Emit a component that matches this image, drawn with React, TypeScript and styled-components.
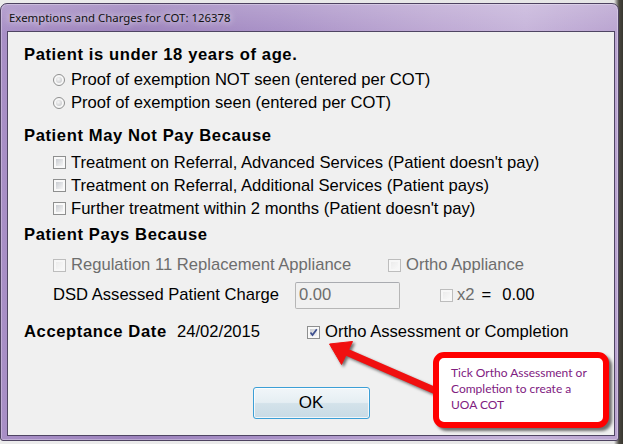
import React from 'react';
import styled, { createGlobalStyle } from 'styled-components';

const Global = createGlobalStyle`
  html, body { margin: 0; padding: 0; }
  body {
    width: 623px; height: 444px; overflow: hidden;
    background: #d9d9d9;
    font-family: "Liberation Sans", Arial, sans-serif;
  }
`;

const Desktop = styled.div`
  position: relative;
  width: 623px;
  height: 444px;
  box-sizing: border-box;
  padding-top: 3px;
  background: linear-gradient(90deg, #ececec 0, #e6e6e6 614px, #4a4840 619px, #38362f 623px);
`;

const Window = styled.div`
  width: 619px;
  height: 438px;
  box-sizing: border-box;
  display: flex;
  flex-direction: column;
  padding: 0 3px 4px 6px;
  border: 1px solid #4d4260;
  border-radius: 7px 7px 3px 3px;
  background:
    linear-gradient(180deg, rgba(255,255,255,0.18) 0, rgba(255,255,255,0) 30px),
    linear-gradient(90deg, #a88fc6 0%, #9c82bc 22%, #a991c7 45%, #bda8d3 70%, #c6b4da 85%, #b9a3d0 100%);
  box-shadow: inset 0 0 0 1px rgba(255,255,255,0.3);
`;

const TitleBar = styled.div`
  height: 27px;
  display: flex;
  align-items: center;
  padding-left: 2px;
  font-family: "Noto Sans", "Open Sans", sans-serif;
  font-size: 11.4px;
  color: #111;
  text-shadow: 0 0 6px rgba(255,255,255,0.7), 0 0 10px rgba(255,255,255,0.5);
`;

const Client = styled.div`
  flex: 1;
  display: flex;
  flex-direction: column;
  background: #f0f0f0;
  border: 1px solid #4f4563;
  font-size: 16.6px;
  color: #000;
`;

const Form = styled.div`
  display: flex;
  flex-direction: column;
  padding: 11px 0 0 16px;
`;

const Heading = styled.div<{ $mt?: number }>`
  height: 24px;
  display: flex;
  align-items: center;
  margin-top: ${p => p.$mt ?? 0}px;
  font-weight: bold;
  letter-spacing: 0.6px;
`;

const Group = styled.div<{ $mt?: number }>`
  display: flex;
  flex-direction: column;
  margin-top: ${p => p.$mt ?? 0}px;
`;

const Row = styled.div<{ $h?: number; $mt?: number; $indent?: boolean }>`
  height: ${p => p.$h ?? 23}px;
  display: flex;
  align-items: center;
  margin-top: ${p => p.$mt ?? 0}px;
  margin-left: ${p => (p.$indent === false ? 0 : 29)}px;
`;

const Option = styled.label<{ $w?: number; $disabled?: boolean; $ml?: number }>`
  display: flex;
  align-items: center;
  gap: 5px;
  white-space: nowrap;
  width: ${p => (p.$w ? `${p.$w}px` : 'auto')};
  margin-left: ${p => p.$ml ?? 0}px;
  color: ${p => (p.$disabled ? '#6d6d6d' : '#000')};
`;

const CheckBox = styled.span<{ $disabled?: boolean }>`
  position: relative;
  flex: none;
  width: 13px;
  height: 13px;
  box-sizing: border-box;
  padding: 2px;
  border: 1px solid ${p => (p.$disabled ? '#bdbdbd' : '#8e8f8f')};
  background: ${p =>
    p.$disabled
      ? 'linear-gradient(135deg, #ececec, #f8f8f8) content-box, #f7f7f7'
      : 'linear-gradient(135deg, #c9ccd1, #f5f5f5) content-box, #f9f9f9'};
  & > svg { position: absolute; left: 0; top: 0; }
`;

const Radio = styled.span`
  flex: none;
  width: 12px;
  height: 12px;
  margin-right: 1px;
  box-sizing: border-box;
  padding: 2px;
  border: 1px solid #8e8f8f;
  border-radius: 50%;
  background: radial-gradient(circle at 40% 35%, #f6f6f6 0, #d5d6d8 60%, #bfc1c4 100%) content-box, #f7f7f7;
`;

const Text = styled.span<{ $w?: number; $ml?: number; $muted?: boolean; $bold?: boolean }>`
  white-space: nowrap;
  width: ${p => (p.$w ? `${p.$w}px` : 'auto')};
  margin-left: ${p => p.$ml ?? 0}px;
  color: ${p => (p.$muted ? '#6d6d6d' : '#000')};
  font-weight: ${p => (p.$bold ? 'bold' : 'normal')};
  letter-spacing: ${p => (p.$bold ? '0.6px' : '0')};
  flex: none;
`;

const AmountInput = styled.div`
  width: 105px;
  height: 27px;
  box-sizing: border-box;
  display: flex;
  align-items: center;
  padding-left: 3px;
  border: 1px solid #b6b6b6;
  border-top-color: #a9abb0;
  border-radius: 2px;
  background: #f0f0f0;
  color: #6d6d6d;
`;

const ButtonBar = styled.div`
  display: flex;
  justify-content: center;
  margin-top: 43px;
`;

const OkButton = styled.button`
  width: 117px;
  height: 32px;
  box-sizing: border-box;
  border: 1px solid #3c9fd6;
  border-radius: 3px;
  font-family: "Liberation Sans", Arial, sans-serif;
  font-size: 17px;
  color: #000;
  background: linear-gradient(180deg, #f1f6f9 0%, #e5eef3 48%, #d3e2ea 52%, #c9dbe5 100%);
  box-shadow: inset 0 0 0 1px rgba(255,255,255,0.75);
  padding: 0;
`;

const Callout = styled.div`
  position: absolute;
  left: 433px;
  top: 352px;
  width: 176px;
  height: 76px;
  box-sizing: border-box;
  border: 6px solid #ff0000;
  border-radius: 11px;
  background: #fff;
  box-shadow: 3px 3px 3px rgba(0,0,0,0.55);
  padding: 7px 0 0 12px;
  font-family: Lato, "Open Sans", sans-serif;
  font-size: 12px;
  line-height: 16px;
  color: #80207f;
`;

const ArrowSvg = styled.svg`
  position: absolute;
  left: 320px;
  top: 335px;
  overflow: visible;
  filter: drop-shadow(2px 2px 1.5px rgba(0,0,0,0.55));
`;

const Check = () => (
  <svg width="11" height="11" viewBox="0 0 11 11">
    <path d="M2.5 5.5 L4.5 8 L8.8 2.2" fill="none" stroke="#3d4f8f" strokeWidth="1.7" />
  </svg>
);

export default function App() {
  return (
    <Desktop>
      <Global />
      <Window>
        <TitleBar>Exemptions and Charges for COT: 126378</TitleBar>
        <Client>
          <Form>
            <Heading>Patient is under 18 years of age.</Heading>
            <Group $mt={1}>
              <Row>
                <Option><Radio />Proof of exemption NOT seen (entered per COT)</Option>
              </Row>
              <Row>
                <Option><Radio />Proof of exemption seen (entered per COT)</Option>
              </Row>
            </Group>

            <Heading $mt={10}>Patient May Not Pay Because</Heading>
            <Group $mt={3}>
              <Row>
                <Option><CheckBox />Treatment on Referral, Advanced Services (Patient doesn't pay)</Option>
              </Row>
              <Row>
                <Option><CheckBox />Treatment on Referral, Additional Services (Patient pays)</Option>
              </Row>
              <Row>
                <Option><CheckBox />Further treatment within 2 months (Patient doesn't pay)</Option>
              </Row>
            </Group>

            <Heading $mt={3}>Patient Pays Because</Heading>
            <Row $h={24} $mt={6}>
              <Option $w={335} $disabled><CheckBox $disabled />Regulation 11 Replacement Appliance</Option>
              <Option $disabled><CheckBox $disabled />Ortho Appliance</Option>
            </Row>
            <Row $h={28} $mt={4}>
              <Text $w={242}>DSD Assessed Patient Charge</Text>
              <AmountInput>0.00</AmountInput>
              <Option $ml={40} $disabled><CheckBox $disabled /></Option>
              <Text $ml={4} $muted>x2</Text>
              <Text $ml={7}>=</Text>
              <Text $ml={11}>0.00</Text>
            </Row>
            <Row $h={24} $mt={11} $indent={false}>
              <Text $w={153} $bold>Acceptance Date</Text>
              <Text $w={130}>24/02/2015</Text>
              <Option><CheckBox><Check /></CheckBox>Ortho Assessment or Completion</Option>
            </Row>
          </Form>
          <ButtonBar>
            <OkButton>OK</OkButton>
          </ButtonBar>
        </Client>
      </Window>

      <ArrowSvg width="125" height="65" viewBox="0 0 125 65">
        <line x1="24" y1="16" x2="116" y2="56" stroke="#f01010" strokeWidth="7" strokeLinecap="round" />
        <polygon points="9.5,9 32.5,6.5 21.5,29.5" fill="#f01010" stroke="#f01010" strokeWidth="1" strokeLinejoin="round" />
      </ArrowSvg>

      <Callout>
        Tick Ortho Assessment or<br />
        Completion to create a<br />
        UOA COT
      </Callout>
    </Desktop>
  );
}
